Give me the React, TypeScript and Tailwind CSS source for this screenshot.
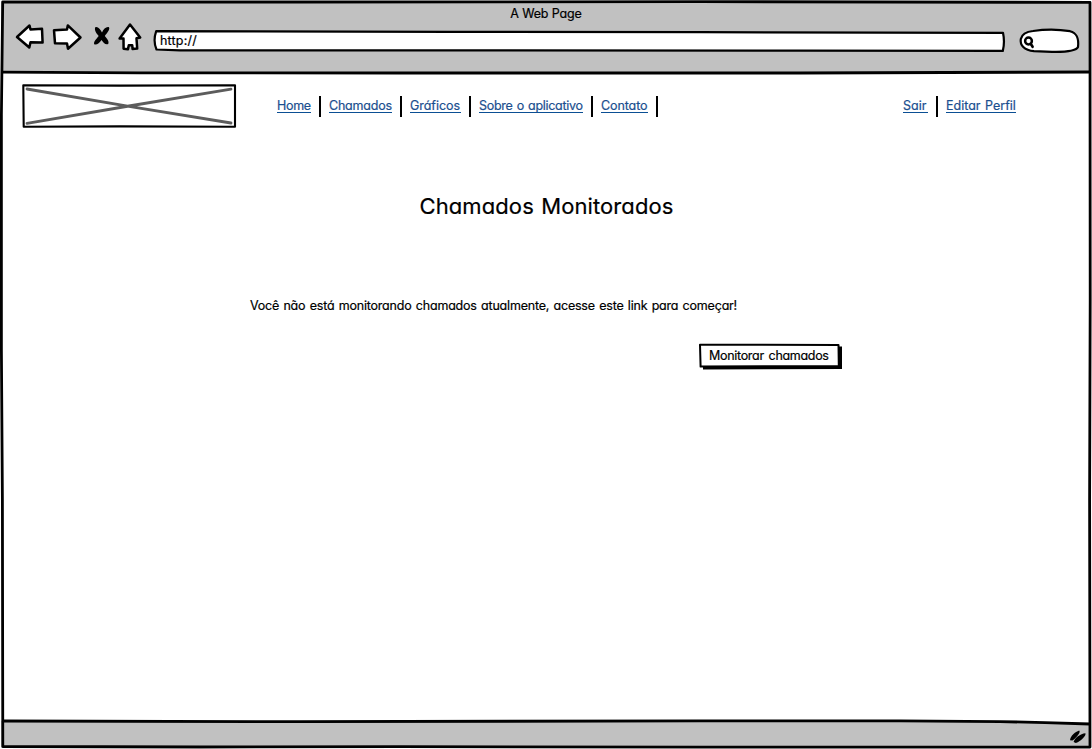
import React from 'react';

type LinkItem = { label: string; box: string };

const mainLinks: LinkItem[] = [
  { label: 'Home', box: 'w-[34px] tracking-[-0.3px]' },
  { label: 'Chamados', box: 'w-[63px] tracking-[-0.2px]' },
  { label: 'Gráficos', box: 'w-[51px] tracking-[-0.05px]' },
  { label: 'Sobre o aplicativo', box: 'w-[104px] tracking-[-0.3px] [word-spacing:1px]' },
  { label: 'Contato', box: 'w-[47px] tracking-[-0.1px]' },
];

function NavLink({ item }: { item: LinkItem }) {
  return (
    <a
      href="#"
      className={`block h-[15px] whitespace-nowrap border-b border-[#0b4f94] text-[12.5px] leading-[15px] text-[#1b4f8f] ${item.box}`}
    >
      {item.label}
    </a>
  );
}

function Separator() {
  return <span className="mx-2 h-[21px] w-[2px] shrink-0 bg-black" />;
}

function Toolbar() {
  return (
    <header className="h-[73px] shrink-0 bg-[#c1c1c1]">
      <div className="pt-[6px] text-center text-[12.5px] leading-[15px] tracking-[-0.15px]">A Web Page</div>
      <div className="flex h-8 items-start">
        <svg className="ml-3 h-8 w-[136px] shrink-0" viewBox="12 21 136 32" fill="#fff" stroke="#000" strokeWidth="2.5" strokeLinejoin="round" strokeLinecap="round">
          <path d="M17 37 L29.5 25.5 L30.5 29.5 L42 28.8 L42.6 42.6 L30.5 42.2 L29.3 47.5 Z" />
          <path d="M54 30.2 L67 29.5 L67.8 25.4 L80.5 37.5 L68 48.7 L67 43.5 L55 43.3 Z" />
          <path
            d="M95.5 27 C98 26.3 100.5 29 102 32.5 C103.5 29 106.5 26.3 109 27.3 C110.3 29.5 107 33 104.8 36 C107 38.5 109.5 41.5 108.2 44 C105.5 45.3 103.3 42.5 101.5 40 C99.5 43 96.5 45.5 94.2 44.3 C93.3 41.8 96.5 39 98.7 36 C96 33 93.8 29.3 95.5 27 Z"
            fill="#000"
            stroke="none"
          />
          <path d="M130 24.5 L140.2 37.5 L136.5 38.3 L137.2 48.5 L132.6 49 L132.2 45.2 L128.8 45.2 L128 49.2 L123.6 48.7 L123.5 38.5 L119.6 38.5 Z" />
        </svg>
        <div className="relative ml-[5px] mt-[9px] h-[22px] w-[853px] shrink-0">
          <svg className="absolute inset-0 h-full w-full" viewBox="153 30 853 22" fill="#fff" stroke="#000" strokeWidth="2.2" strokeLinejoin="round">
            <path d="M156.2 31.2 L450 31.8 L700 32.2 L1003 32.8 Q1005 42 1002.8 50.9 L800 50.6 L350 50.3 L180 50.3 L156.5 49.5 Q152.8 41 156.2 31.2 Z" />
          </svg>
          <span className="relative block pl-[7px] pt-[3px] text-[12.5px] leading-[15px] tracking-[0.2px]">http://</span>
        </div>
        <svg className="ml-[11px] mt-[6px] h-[27px] w-[64px] shrink-0" viewBox="1017 27 64 27" fill="#fff" stroke="#000" strokeWidth="2.2" strokeLinejoin="round" strokeLinecap="round">
          <path d="M1033 31 C1045 29.2 1059 29.3 1070 31.2 C1077 33 1079 38 1078 47 C1076 51.5 1062 52 1052 51.8 L1034 51.2 C1024 50.5 1019.8 45 1020.8 39 C1022 34 1027 31.5 1033 31 Z" />
          <circle cx="1028.5" cy="41" r="3.4" strokeWidth="2.5" />
          <path d="M1031 44.2 L1032.6 46.8" strokeWidth="2.6" />
        </svg>
      </div>
    </header>
  );
}

function LogoPlaceholder() {
  return (
    <svg className="h-11 w-[216px] shrink-0" viewBox="21 84 216 44" fill="none" strokeLinejoin="round" strokeLinecap="round">
      <path d="M23.3 85.2 L120 85.6 L235 85.2 L235 126.7 L120 126.4 L23.7 126.7 Z" fill="#fff" stroke="#000" strokeWidth="2.1" />
      <path d="M27 89 L129 106.3 L231 123 M27 123.3 L129 106 L231 89.2" stroke="#5c5c5c" strokeWidth="2.8" />
    </svg>
  );
}

function Content() {
  return (
    <main className="min-h-0 flex-1 bg-white">
      <div className="flex pl-[21px] pt-[11px]">
        <LogoPlaceholder />
        <nav className="ml-10 mt-3 flex h-[21px] items-start">
          {mainLinks.map((item) => (
            <React.Fragment key={item.label}>
              <div className="pt-[2px]"><NavLink item={item} /></div>
              <Separator />
            </React.Fragment>
          ))}
        </nav>
        <nav className="ml-[237px] mt-3 flex h-[21px] items-start">
          <div className="pt-[2px]"><NavLink item={{ label: 'Sair', box: 'w-[25px] tracking-[0px]' }} /></div>
          <Separator />
          <div className="pt-[2px]"><NavLink item={{ label: 'Editar Perfil', box: 'w-[70px] tracking-[0px] [word-spacing:1px]' }} /></div>
        </nav>
      </div>
      <h1 className="ml-[419.5px] mt-[62px] whitespace-nowrap text-[22px] leading-8 tracking-[0.1px] [word-spacing:1px]">Chamados Monitorados</h1>
      <p className="ml-[250px] mt-[76px] whitespace-nowrap text-[12.5px] leading-[15px] tracking-[-0.2px] [word-spacing:1px]">
        Você não está monitorando chamados atualmente, acesse este link para começar!
      </p>
      <button className="relative ml-[698px] mt-[30px] block h-[28px] w-[145px] text-left">
        <svg className="absolute inset-0 h-full w-full" viewBox="698 343 145 28" strokeLinejoin="round">
          <path d="M703 347 L842 346.5 L842 369 L703 369.5 Z" />
          <path d="M700 344.7 L838.5 344.9 L838.8 366 L700.6 366.6 Z" fill="#fff" stroke="#000" strokeWidth="2" />
        </svg>
        <span className="relative -top-[2px] block whitespace-nowrap pl-[11px] text-[12.5px] leading-[15px] tracking-[-0.3px] [word-spacing:1.5px]">Monitorar chamados</span>
      </button>
    </main>
  );
}

function StatusBar() {
  return (
    <footer className="relative flex h-[28px] shrink-0 items-center justify-end bg-[#c1c1c1] pr-[5px]">
      <svg className="absolute -top-px left-0 h-1 w-full" viewBox="0 720 1092 4">
        <path d="M0 720 L1092 720 L1092 723.5 L1045 722.4 L1000 721.4 L900 720.5 L0 720.5 Z" fill="#fff" />
      </svg>
      <svg className="mt-1 h-4 w-[18px]" viewBox="1069 728 18 16" fill="#000">
        <path d="M1070 739.3 C1070.5 735 1075 731 1079.2 729.6 C1081 731 1077 736.5 1072.5 739.6 Z" />
        <path d="M1073.6 741 C1074.5 737 1080.5 732.6 1085.4 732.2 C1086.5 734.5 1081 740 1075.8 742 Z" />
      </svg>
    </footer>
  );
}

function SketchBorder() {
  return (
    <svg className="pointer-events-none absolute inset-0 h-full w-full" viewBox="0 0 1092 749" fill="none" stroke="#000" strokeWidth="2.8" strokeLinejoin="round">
      <path d="M0.5 0.5 H1091.5 V748.5 H0.5 Z" stroke="#fff" strokeWidth="1.4" />
      <path d="M2.7 2 L300 2 L700 1.6 L1090 2.4 L1090.2 300 L1089.6 500 L1090 747 L700 747.2 L400 746.6 L200 747 L2.8 746.5 L2.4 500 L1.4 350 L1.4 115 Z" />
      <path d="M2 72.2 L140 72.8 L400 73 L800 73 L1090 72" />
      <path d="M2 721 L300 721.7 L700 720.8 L900 720.9 L1000 721.6 L1045 722.6 L1090 724" />
    </svg>
  );
}

export default function App() {
  return (
    <div className="relative flex h-[749px] w-[1092px] flex-col overflow-hidden bg-white font-['Inter','Open_Sans',sans-serif] text-black [-webkit-text-stroke:0.2px] [font-feature-settings:'cv11']">
      <Toolbar />
      <Content />
      <StatusBar />
      <SketchBorder />
    </div>
  );
}
